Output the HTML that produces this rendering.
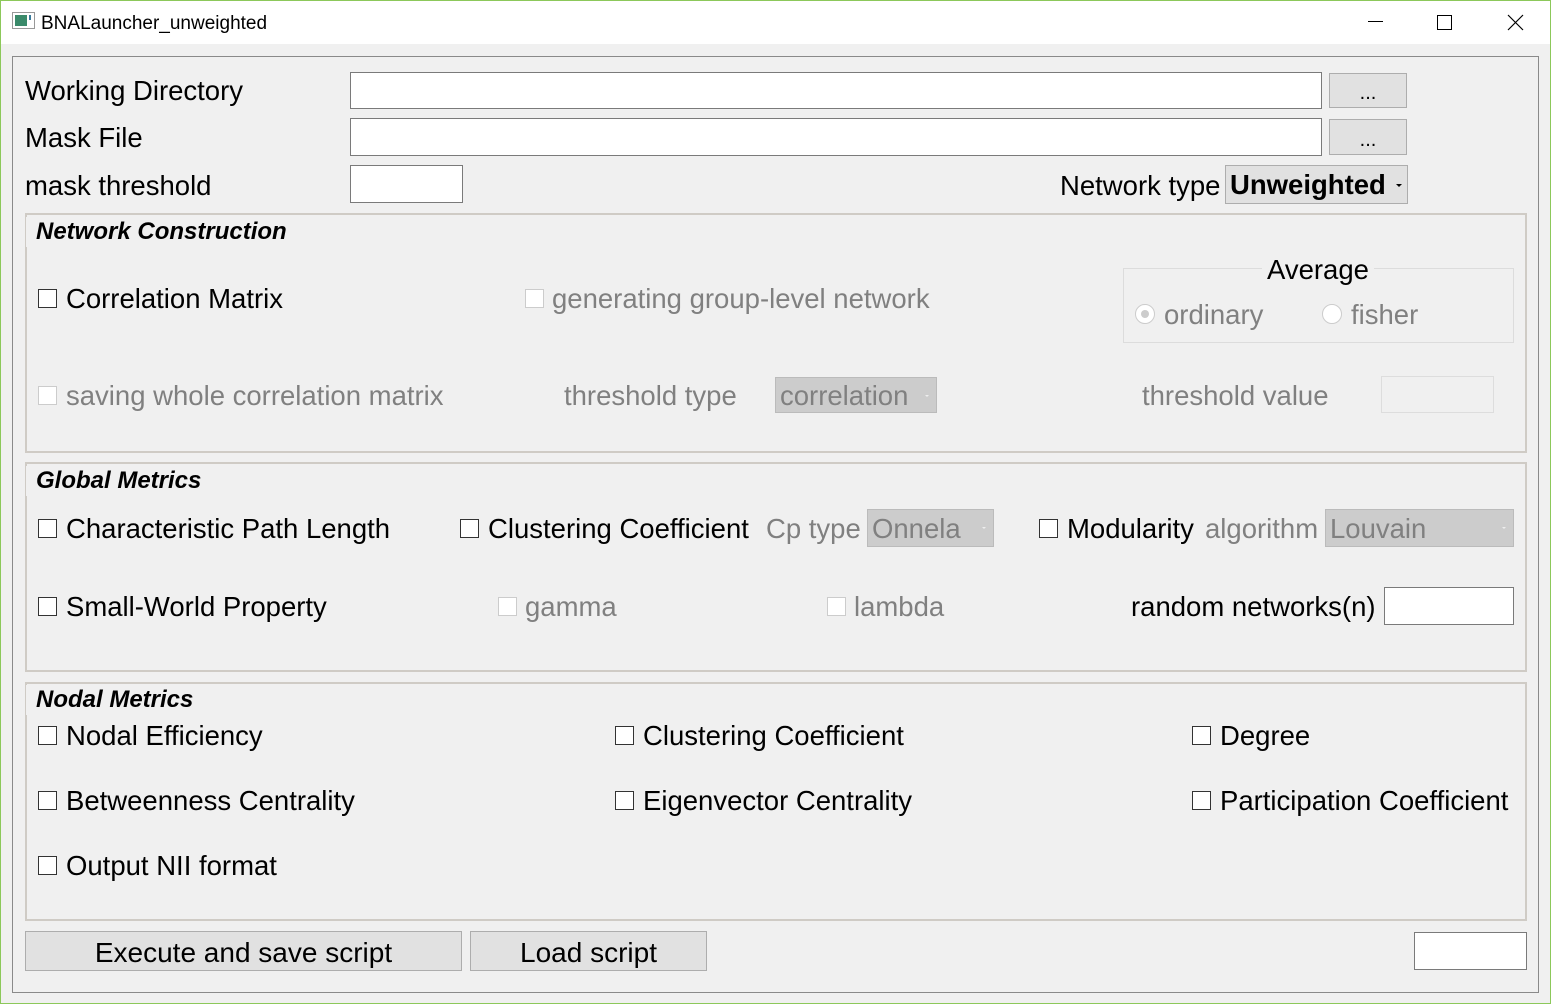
<!DOCTYPE html>
<html><head><meta charset="utf-8"><style>
*{margin:0;padding:0;box-sizing:border-box}
body{width:1551px;height:1004px;background:#f0f0f0;position:relative;overflow:hidden;font-family:"Liberation Sans",Arial,sans-serif;font-size:27.5px;color:#000}
.a{position:absolute;white-space:nowrap}
.t{position:absolute;white-space:nowrap;line-height:30px;height:30px;margin-top:1px}
.g{color:#808080}
.cb{position:absolute;width:19px;height:19px;border:1px solid #333;background:#fff}
.cbd{position:absolute;width:19px;height:19px;border:1px solid #ccc;background:#fff}
.in{position:absolute;background:#fff;border:1px solid #7a7a7a}
.btn{position:absolute;background:#e1e1e1;border:1px solid #adadad;text-align:center}
.grp{position:absolute;border:2px solid #cfcbc5}
.gt{position:absolute;font-weight:bold;font-style:italic;font-size:24px;background:#f0f0f0;padding:0 6px 0 10px;line-height:30px}
</style></head><body>
<div class="a" style="left:0;top:0;width:1551px;height:44px;background:#fff"></div>
<svg class="a" style="left:12px;top:12px" width="24" height="18"><rect x="0.5" y="0.5" width="22" height="16" fill="#fff" stroke="#999"/><rect x="3" y="3" width="12" height="11" fill="#3a8a6a"/><rect x="17" y="3" width="2" height="5" fill="#3a7a9a"/></svg>
<div class="a" style="left:41px;top:13px;font-size:19px;line-height:22px">BNALauncher_unweighted</div>
<div class="a" style="left:1368px;top:21px;width:15px;height:1px;background:#000"></div>
<div class="a" style="left:1437px;top:15px;width:15px;height:15px;border:1px solid #000"></div>
<svg class="a" style="left:1507px;top:14px" width="17" height="17"><path d="M1 1L16 16M16 1L1 16" stroke="#000" stroke-width="1.2"/></svg>

<div class="a" style="left:12px;top:56px;width:1527px;height:937px;border:1px solid #8a8a8a"></div>

<div class="t" style="left:25px;top:75px">Working Directory</div>
<div class="in" style="left:350px;top:72px;width:972px;height:37px"></div>
<div class="btn" style="left:1329px;top:73px;width:78px;height:35px;font-size:20px;line-height:38px">...</div>
<div class="t" style="left:25px;top:122px">Mask File</div>
<div class="in" style="left:350px;top:118px;width:972px;height:38px"></div>
<div class="btn" style="left:1329px;top:119px;width:78px;height:36px;font-size:20px;line-height:40px">...</div>
<div class="t" style="left:25px;top:170px">mask threshold</div>
<div class="in" style="left:350px;top:165px;width:113px;height:38px"></div>
<div class="t" style="left:1060px;top:170px">Network type</div>
<div class="btn" style="left:1225px;top:165px;width:183px;height:39px;text-align:left"></div>
<div class="t" style="left:1230px;top:169px;font-weight:bold">Unweighted</div>
<div class="a" style="left:1396px;top:184px;border:3px solid transparent;border-top:3px solid #000"></div>

<div class="grp" style="left:25px;top:213px;width:1502px;height:240px"></div>
<div class="gt" style="left:26px;top:217px">Network Construction</div>
<div class="cb" style="left:38px;top:289px"></div><div class="t" style="left:66px;top:283px">Correlation Matrix</div>
<div class="cbd" style="left:525px;top:289px"></div><div class="t g" style="left:552px;top:283px">generating group-level network</div>
<div class="a" style="left:1123px;top:268px;width:391px;height:75px;border:1px solid #dcdcdc"></div>
<div class="t" style="left:1262px;top:254px;background:#f0f0f0;padding:0 5px">Average</div>
<div class="a" style="left:1135px;top:304px;width:20px;height:20px;border-radius:50%;border:1px solid #ccc;background:#fff"></div>
<div class="a" style="left:1141px;top:310px;width:8px;height:8px;border-radius:50%;background:#ccc"></div>
<div class="t g" style="left:1164px;top:299px">ordinary</div>
<div class="a" style="left:1322px;top:304px;width:20px;height:20px;border-radius:50%;border:1px solid #ccc;background:#fff"></div>
<div class="t g" style="left:1351px;top:299px">fisher</div>
<div class="cbd" style="left:38px;top:386px"></div><div class="t g" style="left:66px;top:380px">saving whole correlation matrix</div>
<div class="t g" style="left:564px;top:380px">threshold type</div>
<div class="a" style="left:775px;top:377px;width:162px;height:36px;background:#ccc;border:1px solid #bbb"></div>
<div class="t g" style="left:780px;top:380px">correlation</div>
<div class="a" style="left:925px;top:395px;border:2px solid transparent;border-top:2px solid #eee"></div>
<div class="t g" style="left:1142px;top:380px">threshold value</div>
<div class="a" style="left:1381px;top:376px;width:113px;height:37px;border:1px solid #ddd;background:#f0f0f0"></div>

<div class="grp" style="left:25px;top:462px;width:1502px;height:210px"></div>
<div class="gt" style="left:26px;top:466px">Global Metrics</div>
<div class="cb" style="left:38px;top:519px"></div><div class="t" style="left:66px;top:513px">Characteristic Path Length</div>
<div class="cb" style="left:460px;top:519px"></div><div class="t" style="left:488px;top:513px">Clustering Coefficient</div>
<div class="t g" style="left:766px;top:513px">Cp type</div>
<div class="a" style="left:867px;top:509px;width:127px;height:38px;background:#ccc;border:1px solid #bbb"></div>
<div class="t g" style="left:872px;top:513px">Onnela</div>
<div class="a" style="left:982px;top:527px;border:2px solid transparent;border-top:2px solid #eee"></div>
<div class="cb" style="left:1039px;top:519px"></div><div class="t" style="left:1067px;top:513px">Modularity</div>
<div class="t g" style="left:1205px;top:513px">algorithm</div>
<div class="a" style="left:1325px;top:509px;width:189px;height:38px;background:#ccc;border:1px solid #bbb"></div>
<div class="t g" style="left:1330px;top:513px">Louvain</div>
<div class="a" style="left:1502px;top:527px;border:2px solid transparent;border-top:2px solid #eee"></div>
<div class="cb" style="left:38px;top:597px"></div><div class="t" style="left:66px;top:591px">Small-World Property</div>
<div class="cbd" style="left:498px;top:597px"></div><div class="t g" style="left:525px;top:591px">gamma</div>
<div class="cbd" style="left:827px;top:597px"></div><div class="t g" style="left:854px;top:591px">lambda</div>
<div class="t" style="left:1131px;top:591px">random networks(n)</div>
<div class="in" style="left:1384px;top:587px;width:130px;height:38px"></div>

<div class="grp" style="left:25px;top:682px;width:1502px;height:239px"></div>
<div class="gt" style="left:26px;top:685px">Nodal Metrics</div>
<div class="cb" style="left:38px;top:726px"></div><div class="t" style="left:66px;top:720px">Nodal Efficiency</div>
<div class="cb" style="left:615px;top:726px"></div><div class="t" style="left:643px;top:720px">Clustering Coefficient</div>
<div class="cb" style="left:1192px;top:726px"></div><div class="t" style="left:1220px;top:720px">Degree</div>
<div class="cb" style="left:38px;top:791px"></div><div class="t" style="left:66px;top:785px">Betweenness Centrality</div>
<div class="cb" style="left:615px;top:791px"></div><div class="t" style="left:643px;top:785px">Eigenvector Centrality</div>
<div class="cb" style="left:1192px;top:791px"></div><div class="t" style="left:1220px;top:785px">Participation Coefficient</div>
<div class="cb" style="left:38px;top:856px"></div><div class="t" style="left:66px;top:850px">Output NII format</div>

<div class="btn" style="left:25px;top:931px;width:437px;height:40px;line-height:41px;font-size:28px">Execute and save script</div>
<div class="btn" style="left:470px;top:931px;width:237px;height:40px;line-height:41px;font-size:28px">Load script</div>
<div class="in" style="left:1414px;top:932px;width:113px;height:38px"></div>
<div class="a" style="left:0;top:0;width:1551px;height:1004px;border:1px solid #8cc85a"></div>
</body></html>
